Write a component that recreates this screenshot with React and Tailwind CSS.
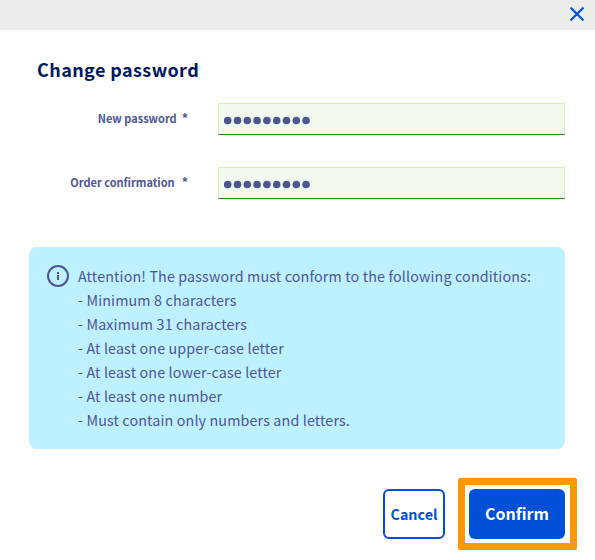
const rules = [
  'Attention! The password must conform to the following conditions:',
  '- Minimum 8 characters',
  '- Maximum 31 characters',
  '- At least one upper-case letter',
  '- At least one lower-case letter',
  '- At least one number',
  '- Must contain only numbers and letters.',
];

function Field({ label, labelClass }) {
  return (
    <div className="flex h-8 items-center">
      <div className="flex w-[188px] justify-end pb-0.5 text-[11px] leading-4 font-bold text-[#4d5592] whitespace-nowrap">
        <span className={labelClass}>{label}</span>
        <span className="text-[12.5px]">*</span>
      </div>
      <div className="ml-[30px] flex h-8 w-[347px] items-center border border-[#d9f0b4] border-b-[#2b8000] bg-[#f2faf0] pl-[5px] pt-[3px]">
        <svg width="90" height="9" viewBox="0 0 90 9" fill="#4d5592">
          {Array.from({ length: 9 }, (_, i) => (
            <circle key={i} cx={3.7 + i * 9.8} cy="4.5" r="3.8" />
          ))}
        </svg>
      </div>
    </div>
  );
}

export default function App() {
  return (
    <div className="flex h-[560px] w-[595px] flex-col overflow-hidden bg-white font-['Noto_Sans_CJK_SC',sans-serif]">
      <header className="flex h-[30px] shrink-0 justify-end bg-[#ebedea] pr-[11px] pt-[7px]">
        <svg width="14" height="14" viewBox="0 0 14 14" fill="none" stroke="#0050d7" strokeWidth="2.2" strokeLinecap="round">
          <path d="M1.2 1.2 12.8 12.8M12.8 1.2 1.2 12.8" />
        </svg>
      </header>
      <h1 className="mt-[27px] ml-[37px] h-6 text-[18px] leading-6 font-bold tracking-[0.4px] text-[#00185e]">Change password</h1>
      <div className="mt-[22px] flex flex-col gap-8">
        <Field label="New password" labelClass="mr-[5px]" />
        <Field label="Order confirmation" labelClass="mr-[7px]" />
      </div>
      <section className="mt-12 ml-[29px] flex h-[202px] w-[536px] rounded-lg bg-[#bef1ff] pt-[17px] pl-[18px] text-[#4d5592]">
        <svg className="mt-px shrink-0" width="22" height="22" viewBox="0 0 22 22" fill="none">
          <circle cx="11" cy="11" r="10" stroke="currentColor" strokeWidth="2" />
          <path d="M10 7h2v2h-2zM10 10h2v5h-2z" fill="currentColor" />
        </svg>
        <div className="ml-[9px] text-[14.3px] leading-6 tracking-[0.135px] whitespace-nowrap">
          {rules.map((r) => (
            <p key={r}><span>{r}</span></p>
          ))}
        </div>
      </section>
      <footer className="mt-[29px] flex h-[72px] justify-end pr-[18px]">
        <button className="mt-[11px] mr-[13px] flex h-[50px] w-[62px] items-center justify-center rounded-md border-2 border-[#0050d7] text-[14.3px] leading-6 font-bold text-[#0050d7]">
          <span>Cancel</span>
        </button>
        <div className="flex h-[72px] w-[119px] items-center rounded-xs border-[7px] border-[#ff9900] pl-1">
          <button className="flex h-[50px] w-24 items-center justify-center rounded-md bg-[#0050d7] pb-0.5 text-[16px] leading-6 font-bold text-white">
            <span>Confirm</span>
          </button>
        </div>
      </footer>
    </div>
  );
}
